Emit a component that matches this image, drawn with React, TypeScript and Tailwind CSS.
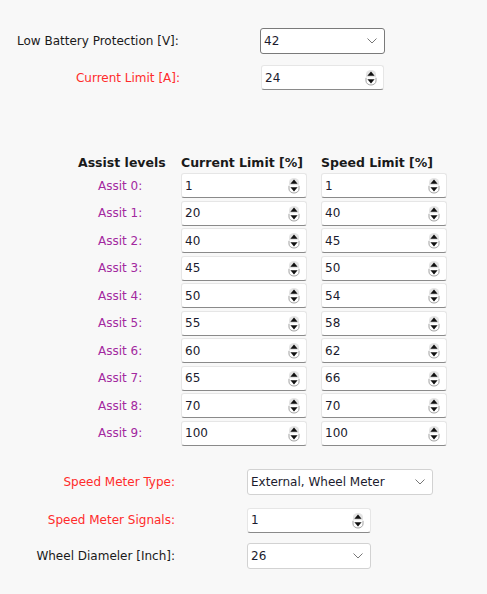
import React from "react";

const assist = [
  [1, 1],
  [20, 40],
  [40, 45],
  [45, 50],
  [50, 54],
  [55, 58],
  [60, 62],
  [65, 66],
  [70, 70],
  [100, 100],
];

function Spinner() {
  return (
    <svg width="12" height="17" viewBox="0 0 12 17" className="shrink-0">
      <path d="M1 8.2 V5 A5 4 0 0 1 11 5 V8.2 Z" fill="#e4e4e4" />
      <path d="M6 2.6 L9.6 6.8 H2.4 Z" fill="#111" />
      <path d="M1 8.8 V12 A5 4 0 0 0 11 12 V8.8" fill="#fff" stroke="#8a8a8a" strokeWidth="0.8" />
      <path d="M2.4 10.2 H9.6 L6 14.4 Z" fill="#111" />
    </svg>
  );
}

function SpinBox({ value, width }: { value: number | string; width: string }) {
  return (
    <div
      className={`${width} h-[25px] flex items-center justify-between bg-white rounded-[3px] border border-[#e6e6e6] border-b-[#8a8a8a] pl-[3px] pr-[6px]`}
    >
      <span className="text-[#1b1b2e]">{value}</span>
      <Spinner />
    </div>
  );
}

function Chevron() {
  return (
    <svg width="10" height="6" viewBox="0 0 10 6">
      <path d="M0.5 0.5 L5 5 L9.5 0.5" fill="none" stroke="#777" strokeWidth="1" />
    </svg>
  );
}

function Combo({ value, width, dark }: { value: string; width: string; dark?: boolean }) {
  return (
    <div
      className={`${width} h-[26px] flex items-center justify-between bg-white rounded-[3px] border ${
        dark ? "border-[#7a7a7a]" : "border-[#d2d2d2]"
      } pl-[3px] pr-[7px]`}
    >
      <span className="text-[#1b1b2e]">{value}</span>
      <Chevron />
    </div>
  );
}

export default function App() {
  return (
    <div
      className="w-[487px] h-[594px] bg-[#f8f8f8] text-[12px] text-[#1a1a1a] overflow-hidden"
      style={{ fontFamily: '"DejaVu Sans", Verdana, sans-serif' }}
    >
      {/* top settings */}
      <div className="pt-[28px] flex flex-col gap-[11px]">
        <div className="flex items-center">
          <div className="w-[260px] pl-[17px]">Low Battery Protection [V]:</div>
          <Combo value="42" width="w-[125px]" dark />
        </div>
        <div className="flex items-center">
          <div className="w-[261px] pr-[81px] text-right text-[#ff2b2b]">Current Limit [A]:</div>
          <SpinBox value={24} width="w-[123px]" />
        </div>
      </div>

      {/* assist levels table */}
      <div className="mt-[64px] grid grid-cols-[167px_126px_126px] gap-x-[14px] gap-y-[2.5px] items-center">
        <div className="pl-[78px] font-bold text-[12.5px] -mb-[2px]">Assist levels</div>
        <div className="font-bold text-[12.5px] -mb-[2px] whitespace-nowrap">Current Limit [%]</div>
        <div className="font-bold text-[12.5px] -mb-[2px] whitespace-nowrap">Speed Limit [%]</div>
        {assist.map(([c, s], i) => (
          <React.Fragment key={i}>
            <div className="pl-[98px] text-[#a3299f]">Assit {i}:</div>
            <SpinBox value={c} width="w-[126px]" />
            <SpinBox value={s} width="w-[126px]" />
          </React.Fragment>
        ))}
      </div>

      {/* speed meter */}
      <div className="mt-[23px] flex flex-col">
        <div className="flex items-center">
          <div className="w-[175px] text-right text-[#ff2b2b]">Speed Meter Type:</div>
          <div className="ml-[72px]">
            <Combo value="External, Wheel Meter" width="w-[186px]" />
          </div>
        </div>
        <div className="flex items-center mt-[13px]">
          <div className="w-[175px] text-right text-[#ff2b2b]">Speed Meter Signals:</div>
          <div className="ml-[72px]">
            <SpinBox value={1} width="w-[124px]" />
          </div>
        </div>
        <div className="flex items-center mt-[10px]">
          <div className="w-[175px] text-right">Wheel Diameler [Inch]:</div>
          <div className="ml-[72px]">
            <Combo value="26" width="w-[124px]" />
          </div>
        </div>
      </div>
    </div>
  );
}
